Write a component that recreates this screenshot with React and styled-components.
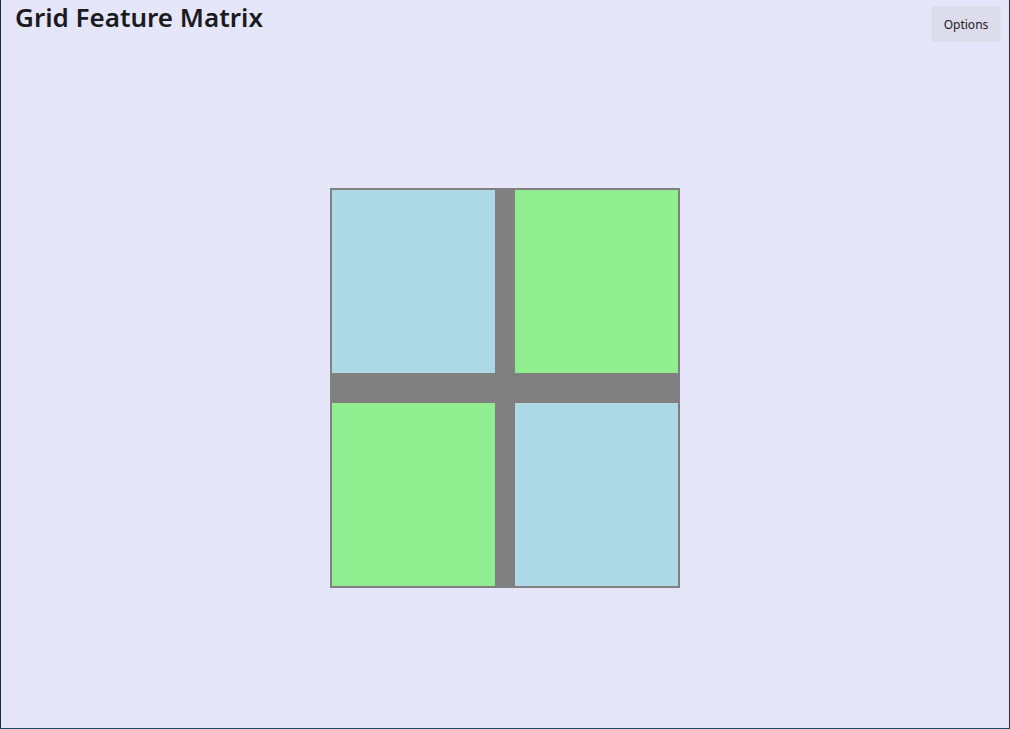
import React from "react";
import styled, { createGlobalStyle } from "styled-components";

const GlobalStyle = createGlobalStyle`
  html, body {
    margin: 0;
    padding: 0;
    background: #e6e6fa;
  }
  * {
    box-sizing: border-box;
  }
`;

const Window = styled.div`
  width: 1010px;
  height: 729px;
  display: flex;
  flex-direction: column;
  background: #e6e6fa;
  border-left: 1px solid #1e2a3a;
  border-right: 1px solid #1c3550;
  border-bottom: 1px solid #1c4a6a;
  font-family: "Noto Sans", "Open Sans", sans-serif;
`;

const Header = styled.div`
  height: 47px;
  display: flex;
  justify-content: space-between;
  align-items: flex-start;
  padding: 0 8px 0 14px;
`;

const Title = styled.h1`
  margin: 0;
  font-size: 26px;
  line-height: 34px;
  font-weight: 600;
  color: #1b1b1f;
`;

const OptionsButton = styled.button`
  margin-top: 6px;
  width: 70px;
  height: 36px;
  border: none;
  border-radius: 4px;
  background: #dcdcec;
  color: #1b1b1b;
  font-family: "Noto Sans", "Open Sans", sans-serif;
  font-size: 12px;
  padding: 0;
  cursor: pointer;
`;

const Content = styled.div`
  flex: 1;
  display: flex;
  align-items: center;
  justify-content: center;
`;

const Matrix = styled.div`
  display: grid;
  grid-template-columns: 163px 163px;
  grid-template-rows: 183px 183px;
  column-gap: 20px;
  row-gap: 30px;
  background: #808080;
  border: 2px solid #808080;
`;

const Cell = styled.div`
  background: ${(p) => (p.$tone === "green" ? "#90ee90" : "#add8e6")};
`;

const cells = ["blue", "green", "green", "blue"];

export default function App() {
  return (
    <>
      <GlobalStyle />
      <Window>
        <Header>
          <Title>Grid Feature Matrix</Title>
          <OptionsButton>Options</OptionsButton>
        </Header>
        <Content>
          <Matrix>
            {cells.map((tone, i) => (
              <Cell key={i} $tone={tone} />
            ))}
          </Matrix>
        </Content>
      </Window>
    </>
  );
}
